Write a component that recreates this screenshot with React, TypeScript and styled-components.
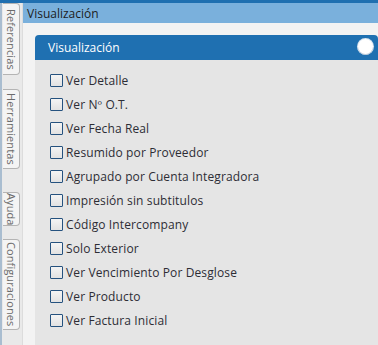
import React from 'react';
import styled, { createGlobalStyle } from 'styled-components';

const GlobalStyle = createGlobalStyle`
  html, body {
    margin: 0;
    padding: 0;
    background: #f3f3f3;
  }
  body {
    font-family: "Open Sans", "Noto Sans", sans-serif;
  }
`;

const Frame = styled.div`
  width: 378px;
  height: 345px;
  display: flex;
  flex-direction: column;
  overflow: hidden;
  background: #f3f3f3;
`;

const TopStrip = styled.div`
  height: 3px;
  background: #1f6fb0;
  flex-shrink: 0;
`;

const Body = styled.div`
  flex: 1;
  display: flex;
  min-height: 0;
`;

const SideBar = styled.div`
  width: 20px;
  flex-shrink: 0;
  background: #e9e9e9;
  border-left: 2px solid #a9bdd0;
  border-right: 1px solid #dcdcdc;
  display: flex;
  flex-direction: column;
  align-items: flex-start;
`;

const Tab = styled.div<{ $height: number; $gap: number }>`
  margin-top: ${(p) => p.$gap}px;
  margin-left: 1px;
  width: 17px;
  height: ${(p) => p.$height}px;
  box-sizing: border-box;
  background: #f4f4f4;
  border: 1px solid #b4b4b4;
  border-left: none;
  border-radius: 0 4px 4px 0;
  display: flex;
  align-items: center;
  justify-content: center;

  & > span {
    writing-mode: vertical-rl;
    font-size: 11px;
    color: #6b6b6b;
    letter-spacing: 0.1px;
    white-space: nowrap;
  }
`;

const Main = styled.div`
  flex: 1;
  display: flex;
  flex-direction: column;
  min-width: 0;
`;

const TitleBar = styled.div`
  height: 20px;
  background: #7ab0dc;
  display: flex;
  align-items: center;
  padding-left: 4px;
  font-size: 12px;
  color: #1d1d1d;
`;

const Content = styled.div`
  flex: 1;
  padding: 12px 0 0 12px;
  display: flex;
  min-height: 0;
`;

const Panel = styled.div`
  flex: 1;
  display: flex;
  flex-direction: column;
  background: #e5e5e5;
  border-radius: 4px 4px 0 0;
  overflow: hidden;
`;

const PanelHeader = styled.div`
  height: 25px;
  background: #1f70b1;
  display: flex;
  align-items: center;
  justify-content: space-between;
  padding: 0 5px 0 13px;
  font-size: 12px;
  color: #ffffff;
`;

const Knob = styled.div`
  width: 15px;
  height: 15px;
  border-radius: 50%;
  background: #ffffff;
  box-shadow: 0 1px 0 #b9c8d8, 0 0 0 1px #d6e2ee;
  margin-top: -2px;
`;

const OptionList = styled.div`
  display: flex;
  flex-direction: column;
  gap: 10px;
  padding: 13px 0 0 15px;
`;

const Option = styled.label`
  display: flex;
  align-items: center;
  height: 14px;
  font-size: 12px;
  letter-spacing: 0.12px;
  color: #2d2d35;
  white-space: nowrap;
`;

const Box = styled.span`
  width: 11px;
  height: 11px;
  border: 1px solid #25527f;
  border-radius: 1px;
  background: linear-gradient(#f4f4f4, #e2e2e2);
  margin-right: 3px;
  flex-shrink: 0;
`;

const tabs = [
  { label: 'Referencias', height: 72, gap: 0 },
  { label: 'Herramientas', height: 80, gap: 14 },
  { label: 'Ayuda', height: 34, gap: 23 },
  { label: 'Configuraciones', height: 91, gap: 13 },
];

const options = [
  'Ver Detalle',
  'Ver Nº O.T.',
  'Ver Fecha Real',
  'Resumido por Proveedor',
  'Agrupado por Cuenta Integradora',
  'Impresión sin subtitulos',
  'Código Intercompany',
  'Solo Exterior',
  'Ver Vencimiento Por Desglose',
  'Ver Producto',
  'Ver Factura Inicial',
];

const App: React.FC = () => {
  return (
    <Frame>
      <GlobalStyle />
      <TopStrip />
      <Body>
        <SideBar>
          {tabs.map((t) => (
            <Tab key={t.label} $height={t.height} $gap={t.gap}>
              <span>{t.label}</span>
            </Tab>
          ))}
        </SideBar>
        <Main>
          <TitleBar>Visualización</TitleBar>
          <Content>
            <Panel>
              <PanelHeader>
                <span>Visualización</span>
                <Knob />
              </PanelHeader>
              <OptionList>
                {options.map((o) => (
                  <Option key={o}>
                    <Box />
                    {o}
                  </Option>
                ))}
              </OptionList>
            </Panel>
          </Content>
        </Main>
      </Body>
    </Frame>
  );
};

export default App;
